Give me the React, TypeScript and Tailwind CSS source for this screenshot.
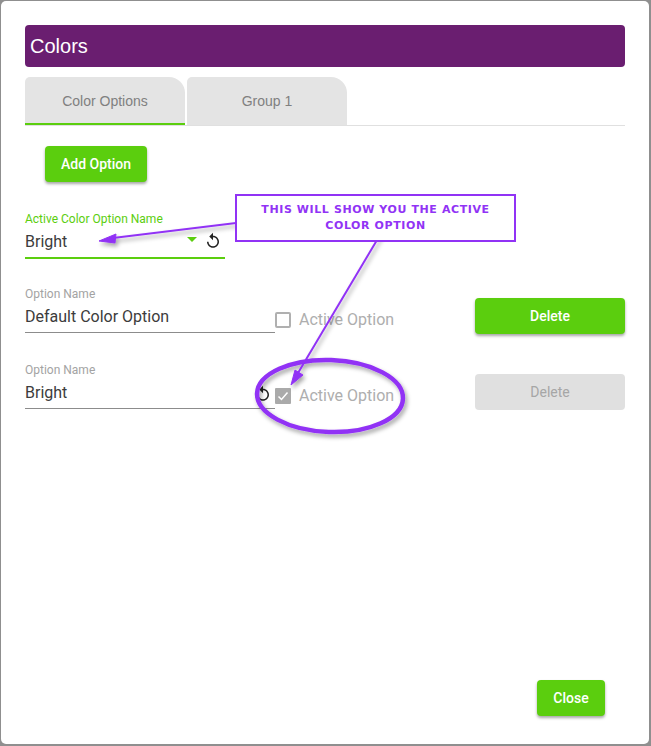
const font = "font-['Roboto','Liberation_Sans',sans-serif]";
const arial = "font-['Liberation_Sans',Arial,sans-serif]";

function ReplayIcon({ className }: { className: string }) {
    return (
        <svg viewBox="0 0 24 24" className={className} fill="currentColor">
            <path d="M12 5V1L7 6l5 5V7c3.31 0 6 2.69 6 6s-2.69 6-6 6-6-2.69-6-6H4c0 4.42 3.58 8 8 8s8-3.58 8-8-3.58-8-8-8z" />
        </svg>
    );
}

function OptionRow({ value, active }: { value: string; active?: boolean }) {
    return (
        <div className="flex h-[47px] items-start">
            <div className="relative w-[250px] h-[46px] border-b border-[#8c8c8c]">
                <div className="text-[12px] leading-[14px] text-[#a3a3a3]">Option Name</div>
                <div className="mt-[6px] text-[16px] leading-[20px] text-[#3c3c3c]">{value}</div>
                {active && <ReplayIcon className="absolute right-[3px] top-[22px] w-[18px] h-[18px] text-[#222222]" />}
            </div>
            <div className="flex items-center mt-[25px] h-[16px] w-[200px]">
                {active ? (
                    <div className="w-[16px] h-[16px] rounded-[1px] bg-[#aaaaaa] flex items-center justify-center">
                        <svg viewBox="0 0 16 16" className="w-[16px] h-[16px]" fill="none" stroke="#ffffff" strokeWidth="1.5">
                            <path d="M3.5 8.5l3 3 6-7" />
                        </svg>
                    </div>
                ) : (
                    <div className="w-[16px] h-[16px] rounded-[2px] border-2 border-[#b0b0b0] bg-white" />
                )}
                <span className="ml-[8px] text-[16px] text-[#aeaeae]">Active Option</span>
            </div>
            <button
                className={
                    active
                        ? "mt-[11px] w-[150px] h-[36px] rounded-[4px] bg-[#e0e0e0] text-[14px] text-[#a6a6a6]"
                        : "mt-[11px] w-[150px] h-[36px] rounded-[4px] bg-[#5bce0e] text-[14px] font-medium text-white shadow-[0_2px_3px_rgba(0,0,0,0.35)]"
                }
            >
                Delete
            </button>
        </div>
    );
}

function Annotations() {
    return (
        <>
            <svg className="absolute left-0 top-0 w-[651px] h-[746px] pointer-events-none" viewBox="0 0 651 746" fill="none">
                <defs>
                    <filter id="soft" x="-20%" y="-20%" width="140%" height="140%">
                        <feDropShadow dx="2" dy="3" stdDeviation="2" floodColor="#000000" floodOpacity="0.35" />
                    </filter>
                </defs>
                <g filter="url(#soft)">
                    <path d="M236 223L113 238" stroke="#9133f5" strokeWidth="2" />
                    <path d="M99 241L116 234L115 243Z" fill="#9133f5" stroke="#9133f5" />
                    <path d="M380 235L298 373" stroke="#9133f5" strokeWidth="2" />
                    <path d="M291 385L295 370L303 375Z" fill="#9133f5" stroke="#9133f5" />
                    <ellipse cx="330" cy="396" rx="73" ry="36" stroke="#9133f5" strokeWidth="4.5" transform="rotate(2 330 396)" />
                </g>
            </svg>
            <div className="absolute left-[235px] top-[194px] w-[281px] h-[48px] border-2 border-[#9133f5] bg-white flex items-center justify-center text-center text-[#9133f5] font-['DejaVu_Sans',sans-serif] font-bold text-[11px] leading-[16px] tracking-[0.6px] px-2">
                THIS WILL SHOW YOU THE ACTIVE COLOR OPTION
            </div>
        </>
    );
}

export default function App() {
    return (
        <div className={`relative w-[651px] h-[746px] overflow-hidden bg-[#8f8f8f] pl-px pt-px ${font}`}>
            <div className="w-[648px] h-[743px] rounded-[5px] bg-white px-[24px] pt-[24px] pb-[28px] flex flex-col">
                <div className={`h-[42px] rounded-[4px] bg-[#6a1e70] text-white text-[20px] leading-[42px] pl-[5px] ${arial}`}>Colors</div>

                <div className={`mt-[10px] h-[49px] flex gap-[2px] border-b border-[#e0e0e0] ${arial}`}>
                    <div className="w-[160px] h-[48px] pt-[2px] rounded-tr-[16px] rounded-tl-[5px] bg-[#e4e4e4] border-b-2 border-[#5bce0e] flex items-center justify-center text-[14px] text-[#808080]">
                        Color Options
                    </div>
                    <div className="w-[160px] h-[48px] rounded-tr-[16px] rounded-tl-[5px] bg-[#e4e4e4] flex items-center justify-center text-[14px] text-[#808080]">
                        Group 1
                    </div>
                </div>

                <button className="mt-[20px] ml-[20px] w-[102px] h-[36px] rounded-[4px] bg-[#5bce0e] text-white text-[14px] font-medium shadow-[0_2px_3px_rgba(0,0,0,0.35)]">
                    Add Option
                </button>

                <div className="mt-[30px] relative w-[200px] h-[47px] border-b-2 border-[#5bce0e]">
                    <div className="text-[12px] leading-[14px] text-[#5bce0e]">Active Color Option Name</div>
                    <div className="mt-[6px] text-[16px] leading-[20px] text-[#3c3c3c]">Bright</div>
                    <div className="absolute left-[162px] top-[25px] w-0 h-0 border-x-[5px] border-x-transparent border-t-[5px] border-t-[#5bce0e]" />
                    <ReplayIcon className="absolute left-[179px] top-[20px] w-[18px] h-[18px] text-[#222222]" />
                </div>

                <div className="mt-[28px]">
                    <OptionRow value="Default Color Option" />
                </div>
                <div className="mt-[29px]">
                    <OptionRow value="Bright" active />
                </div>

                <button className="mt-auto self-end mr-[20px] w-[68px] h-[36px] rounded-[4px] bg-[#5bce0e] text-white text-[14px] font-medium shadow-[0_2px_3px_rgba(0,0,0,0.35)]">
                    Close
                </button>
            </div>
            <Annotations />
        </div>
    );
}
